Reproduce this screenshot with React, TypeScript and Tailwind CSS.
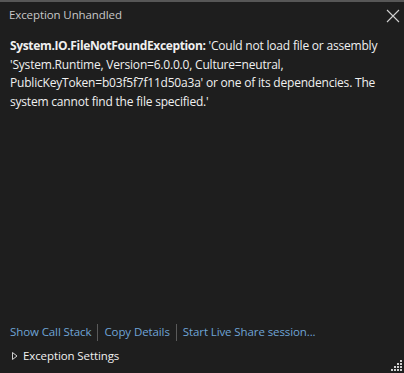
import React from "react";

export default function App() {
  const font = { fontFamily: '"Open Sans", "Noto Sans", sans-serif' };
  return (
    <div
      className="w-[404px] h-[373px] bg-[#1e1e1e] border-t-2 border-[#575757] flex flex-col relative overflow-hidden"
      style={font}
    >
      <div className="flex items-start justify-between pl-[9px] pr-[4px] pt-[4px]">
        <span className="text-[11.5px] tracking-[-0.1px] text-[#c8c8c8] leading-[18px]">Exception Unhandled</span>
        <svg width="14" height="14" viewBox="0 0 14 14" className="mt-[3px]">
          <path d="M1 1 L13 13 M13 1 L1 13" stroke="#d0d0d0" strokeWidth="1.1" />
        </svg>
      </div>
      <div className="pl-[10px] pr-[8px] pt-[13px] text-[12px] tracking-[-0.2px] leading-[18.5px] text-[#f0f0f0]">
        <span className="font-bold tracking-[-0.35px]">System.IO.FileNotFoundException:</span> 'Could not load file or
        assembly 'System.Runtime, Version=6.0.0.0, Culture=neutral,
        PublicKeyToken=b03f5f7f11d50a3a' or one of its dependencies. The system cannot find the
        file specified.'
      </div>
      <div className="flex-1" />
      <div className="pl-[10px] flex items-center text-[11.5px] tracking-[-0.1px] text-[#6fa4d6] leading-[18px]">
        <span>Show Call Stack</span>
        <span className="mx-[6px] w-px h-[17px] bg-[#5a5a5a]" />
        <span>Copy Details</span>
        <span className="mx-[6px] w-px h-[17px] bg-[#5a5a5a]" />
        <span>Start Live Share session...</span>
      </div>
      <div className="pl-[11px] pt-[6px] pb-[8px] flex items-center text-[11.5px] tracking-[-0.1px] text-[#f0f0f0] leading-[18px]">
        <svg width="8" height="10" viewBox="0 0 8 10" className="mr-[4px]">
          <path d="M1.5 1.5 L6 5 L1.5 8.5 Z" fill="none" stroke="#d0d0d0" strokeWidth="1" />
        </svg>
        <span>Exception Settings</span>
      </div>
      <svg
        width="12"
        height="12"
        viewBox="0 0 12 12"
        className="absolute right-[1px] bottom-[1px]"
      >
        {[
          [9, 0],
          [6, 3],
          [9, 3],
          [3, 6],
          [6, 6],
          [9, 6],
          [0, 9],
          [3, 9],
          [6, 9],
          [9, 9],
        ].map(([x, y], i) => (
          <rect key={i} x={x} y={y} width="2" height="2" fill="#d0d0d0" />
        ))}
      </svg>
    </div>
  );
}
